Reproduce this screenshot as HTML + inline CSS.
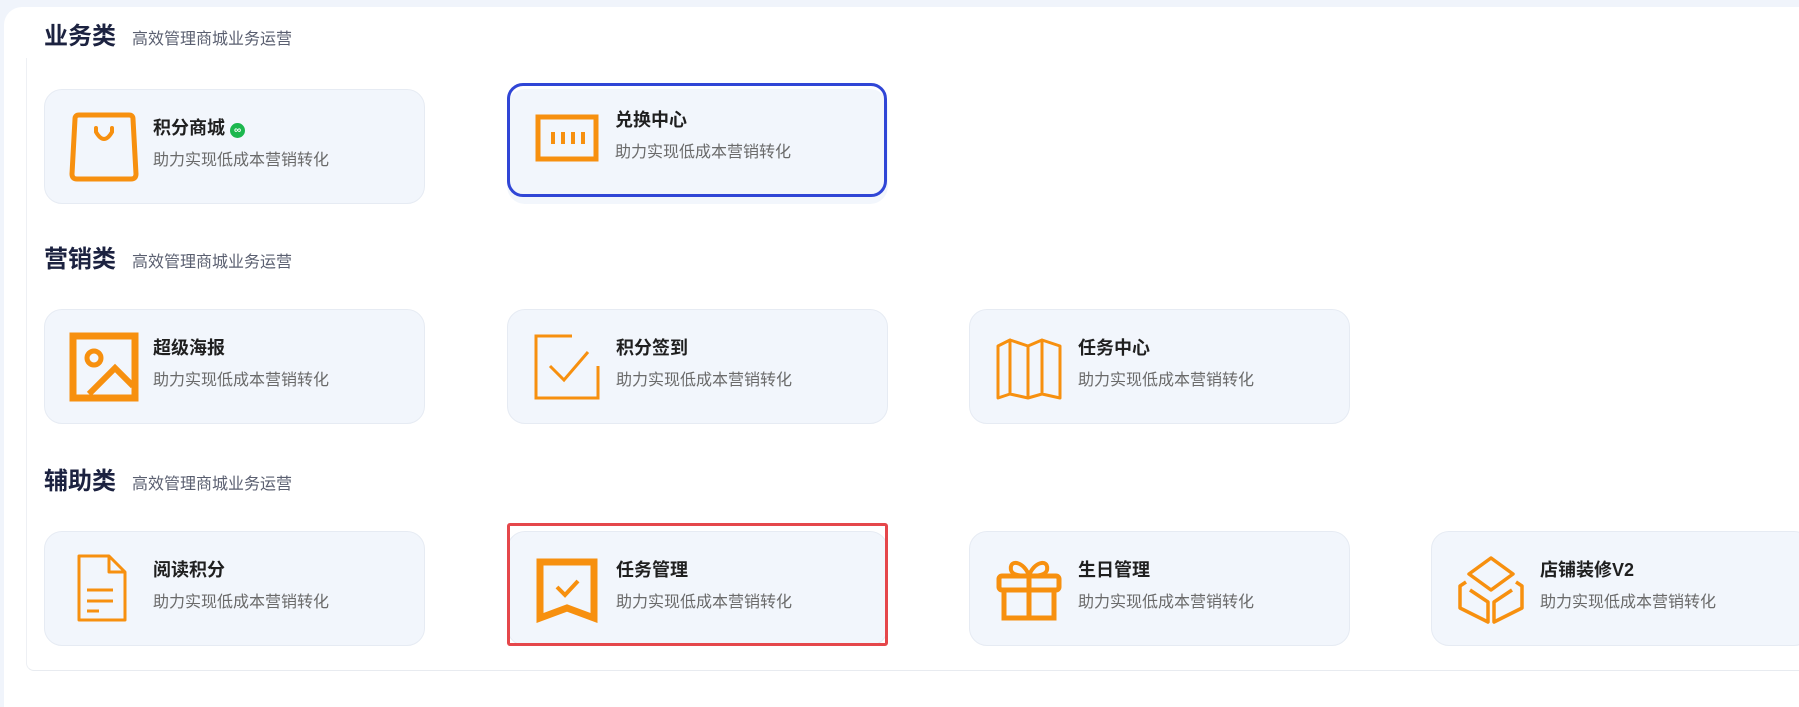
<!DOCTYPE html>
<html><head><meta charset="utf-8"><style>
*{margin:0;padding:0;box-sizing:border-box}
body{width:1799px;height:694px;background:#f0f4fb;font-family:"Liberation Sans","Noto Sans CJK SC",sans-serif;position:relative;overflow:hidden}
.panel{position:absolute;left:4px;top:7px;width:1800px;height:700px;background:#fff;border-radius:18px 0 0 0}
.frame{position:absolute;left:26px;top:58px;width:1780px;height:613px;border-left:1px solid #eef0f4;border-bottom:1px solid #e8ebf0;border-radius:0 0 0 8px}
.h{position:absolute;left:44px;font-size:24px;font-weight:bold;color:#1c2240;line-height:30px}
.h span{font-size:16px;font-weight:normal;color:#5a5f70;margin-left:16px}
.card{position:absolute;width:381px;height:115px;background:#f2f6fc;border:1px solid #e6ebf3;border-radius:18px}
.card svg{position:absolute;left:24px;top:22px;width:70px;height:70px}
.t{position:absolute;left:108px;top:24px;font-size:18px;font-weight:bold;color:#1f1f1f}
.s{position:absolute;left:108px;top:56px;font-size:16px;color:#6a6a6a}
.blue{position:absolute;left:507px;top:83px;width:380px;height:114px;border:3px solid #3046d6;border-radius:16px}
.red{position:absolute;left:507px;top:523px;width:381px;height:123px;border:3px solid #e5474b;border-radius:3px}
</style></head><body>
<div class="panel"></div>
<div class="frame"></div>
<div class="h" style="top:22px">业务类<span>高效管理商城业务运营</span></div>
<div class="h" style="top:245px">营销类<span>高效管理商城业务运营</span></div>
<div class="h" style="top:467px">辅助类<span>高效管理商城业务运营</span></div>

<div class="card" style="left:44px;top:89px"><svg viewBox="0 0 70 70"><path d="M10 3h50q4 0 4 4l3 55q0 5-5 5H8q-5 0-5-5l3-55q0-4 4-4z" fill="none" stroke="#f7900f" stroke-width="5" stroke-linejoin="round"/><path d="M27 16v4q8 14 16 0v-4" fill="none" stroke="#f7900f" stroke-width="4" stroke-linecap="round"/></svg><div class="t">积分商城 <span style="display:inline-block;width:15px;height:15px;border-radius:50%;background:#1cb74e;vertical-align:1px;color:#fff;font-size:10px;line-height:15px;text-align:center">∞</span></div><div class="s">助力实现低成本营销转化</div></div>
<div class="card" style="left:507px;top:89px;border:none;background:#f2f6fc"><svg viewBox="0 0 70 70" style="left:27px;top:15px"><rect x="4" y="13" width="58" height="42" fill="none" stroke="#f7900f" stroke-width="5"/><path d="M19 28v12M29 28v12M39 28v12M49 28v12" stroke="#f7900f" stroke-width="4"/></svg><div class="t" style="top:17px">兑换中心</div><div class="s" style="top:49px">助力实现低成本营销转化</div></div>
<div class="blue"></div>

<div class="card" style="left:44px;top:309px"><svg viewBox="0 0 70 70"><rect x="4" y="4" width="62" height="62" fill="none" stroke="#f7900f" stroke-width="7"/><circle cx="25" cy="26" r="7" fill="none" stroke="#f7900f" stroke-width="5"/><path d="M20 62l26-26 18 18" fill="none" stroke="#f7900f" stroke-width="6"/></svg><div class="t">超级海报</div><div class="s">助力实现低成本营销转化</div></div>
<div class="card" style="left:507px;top:309px"><svg viewBox="0 0 70 70"><path d="M40 4H4v62h62V34" fill="none" stroke="#f7900f" stroke-width="3"/><path d="M18 34l14 14 24-28" fill="none" stroke="#f7900f" stroke-width="3"/></svg><div class="t">积分签到</div><div class="s">助力实现低成本营销转化</div></div>
<div class="card" style="left:969px;top:309px"><svg viewBox="0 0 70 70"><path d="M4 14l12-6v54L4 66zM16 8l18 6v52L16 62zM34 14l14-6v54l-14 4zM48 8l18 6v52l-18-4z" fill="none" stroke="#f7900f" stroke-width="3" stroke-linejoin="round"/></svg><div class="t">任务中心</div><div class="s">助力实现低成本营销转化</div></div>

<div class="card" style="left:44px;top:531px"><svg viewBox="0 0 70 70"><path d="M10 2h30l16 16v48H10z M40 2v16h16" fill="none" stroke="#f7900f" stroke-width="3" stroke-linejoin="round"/><path d="M18 36h26M18 47h26M18 57h12" stroke="#f7900f" stroke-width="3"/></svg><div class="t">阅读积分</div><div class="s">助力实现低成本营销转化</div></div>
<div class="card" style="left:507px;top:531px"><svg viewBox="0 0 70 70"><path d="M8 8h54v56l-27-10-27 10z" fill="none" stroke="#f7900f" stroke-width="7" stroke-linejoin="miter"/><path d="M25 33l8 8 13-14" fill="none" stroke="#f7900f" stroke-width="4"/></svg><div class="t">任务管理</div><div class="s">助力实现低成本营销转化</div></div>
<div class="red"></div>
<div class="card" style="left:969px;top:531px"><svg viewBox="0 0 70 70"><rect x="5" y="22" width="60" height="14" rx="3" fill="none" stroke="#f7900f" stroke-width="5"/><path d="M10 36v28h50V36M35 22v42" fill="none" stroke="#f7900f" stroke-width="5"/><path d="M35 22c-4-14-20-18-18-6 1 5 10 6 18 6c4-14 20-18 18-6-1 5-10 6-18 6" fill="none" stroke="#f7900f" stroke-width="4"/></svg><div class="t">生日管理</div><div class="s">助力实现低成本营销转化</div></div>
<div class="card" style="left:1431px;top:531px"><svg viewBox="0 0 70 70"><path d="M35 4l22 16-22 16-22-16z" fill="none" stroke="#f7900f" stroke-width="3.5" stroke-linejoin="round"/><path d="M10 28L4 32v22l28 14V48L14 36M60 28l6 4v22L38 68V48l18-12" fill="none" stroke="#f7900f" stroke-width="3.5" stroke-linejoin="round"/></svg><div class="t">店铺装修V2</div><div class="s">助力实现低成本营销转化</div></div>
</body></html>
